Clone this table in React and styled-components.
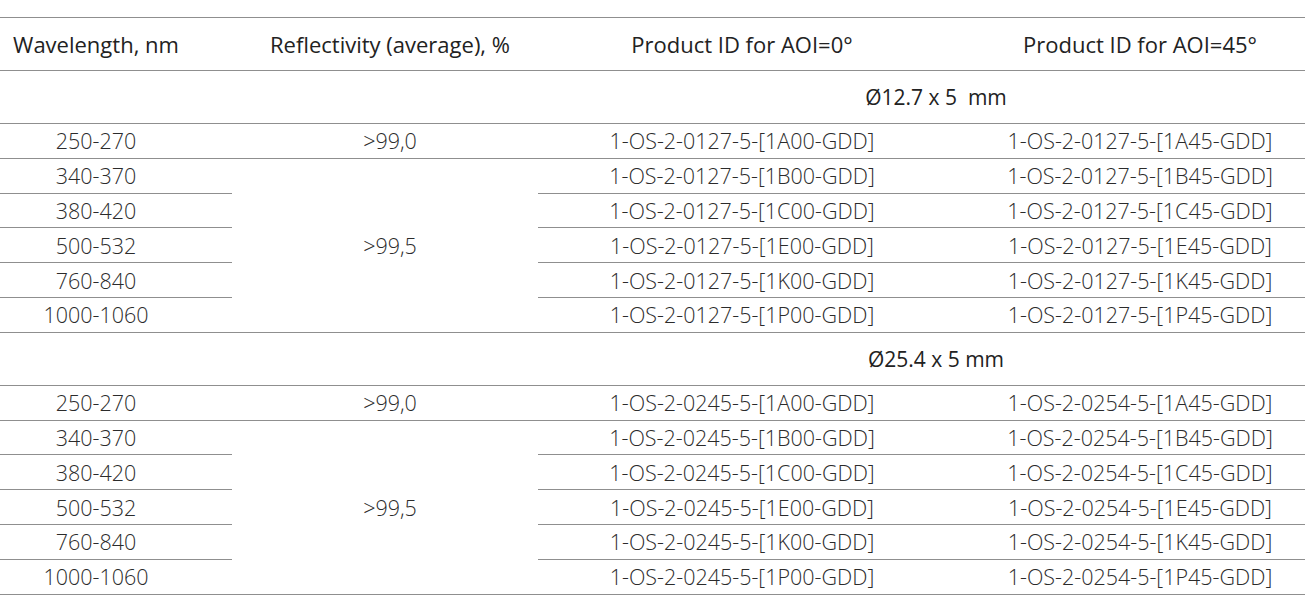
import React from 'react';
import styled, { createGlobalStyle } from 'styled-components';

const GlobalStyle = createGlobalStyle`
  html, body {
    margin: 0;
    padding: 0;
    background: #fff;
    overflow: hidden;
  }
  body {
    font-family: "Open Sans", "Noto Sans", sans-serif;
  }
`;

const sections = [
  {
    size: 'Ø12.7 x 5\u00a0 mm',
    rows: [
      ['250-270', '1-OS-2-0127-5-[1A00-GDD]', '1-OS-2-0127-5-[1A45-GDD]'],
      ['340-370', '1-OS-2-0127-5-[1B00-GDD]', '1-OS-2-0127-5-[1B45-GDD]'],
      ['380-420', '1-OS-2-0127-5-[1C00-GDD]', '1-OS-2-0127-5-[1C45-GDD]'],
      ['500-532', '1-OS-2-0127-5-[1E00-GDD]', '1-OS-2-0127-5-[1E45-GDD]'],
      ['760-840', '1-OS-2-0127-5-[1K00-GDD]', '1-OS-2-0127-5-[1K45-GDD]'],
      ['1000-1060', '1-OS-2-0127-5-[1P00-GDD]', '1-OS-2-0127-5-[1P45-GDD]']
    ]
  },
  {
    size: 'Ø25.4 x 5 mm',
    rows: [
      ['250-270', '1-OS-2-0245-5-[1A00-GDD]', '1-OS-2-0254-5-[1A45-GDD]'],
      ['340-370', '1-OS-2-0245-5-[1B00-GDD]', '1-OS-2-0254-5-[1B45-GDD]'],
      ['380-420', '1-OS-2-0245-5-[1C00-GDD]', '1-OS-2-0254-5-[1C45-GDD]'],
      ['500-532', '1-OS-2-0245-5-[1E00-GDD]', '1-OS-2-0254-5-[1E45-GDD]'],
      ['760-840', '1-OS-2-0245-5-[1K00-GDD]', '1-OS-2-0254-5-[1K45-GDD]'],
      ['1000-1060', '1-OS-2-0245-5-[1P00-GDD]', '1-OS-2-0254-5-[1P45-GDD]']
    ]
  }
];

const App = () => {
  return (
    <Page>
      <GlobalStyle />
      <Table>
        <colgroup>
          <col style={{ width: 272 }} />
          <col style={{ width: 306 }} />
          <col style={{ width: 408 }} />
          <col style={{ width: 388 }} />
        </colgroup>
        <thead>
          <HeadRow>
            <HeadCell>Wavelength, nm</HeadCell>
            <HeadCell shifted>Reflectivity (average), %</HeadCell>
            <HeadCell underline>Product ID for AOI=0°</HeadCell>
            <HeadCell underline>Product ID for AOI=45°</HeadCell>
          </HeadRow>
        </thead>
        <tbody>
          {sections.map((section) => (
            <React.Fragment key={section.size}>
              <SizeRow>
                <SizeCell />
                <SizeCell />
                <SizeCell colSpan={2}>{section.size}</SizeCell>
              </SizeRow>
              {section.rows.map((row, i) => (
                <DataRow key={row[0]}>
                  <Cell>{row[0]}</Cell>
                  {i === 0 && <Cell shifted>&gt;99,0</Cell>}
                  {i === 1 && <Cell shifted rowSpan={5}>&gt;99,5</Cell>}
                  <Cell>{row[1]}</Cell>
                  <Cell>{row[2]}</Cell>
                </DataRow>
              ))}
            </React.Fragment>
          ))}
        </tbody>
      </Table>
    </Page>
  );
};

const Page = styled.div`
  width: 1305px;
  height: 610px;
  padding-top: 17px;
  box-sizing: border-box;
  overflow: hidden;
`;

const Table = styled.table`
  margin-left: -40px;
  width: 1374px;
  table-layout: fixed;
  border-collapse: collapse;
  border-top: 1px solid #8f8f8f;
  color: #2b2b2b;
  font-size: 21.5px;
  font-weight: 300;
  text-align: center;
`;

const HeadRow = styled.tr`
  height: 53px;
`;

const HeadCell = styled.th`
  font-size: 22px;
  font-weight: 400;
  color: #222;
  padding: 0 0 0 ${(p) => (p.shifted ? '10px' : '0')};
  vertical-align: middle;
  white-space: nowrap;
  border-bottom: ${(p) => (p.underline ? '1px solid #8f8f8f' : 'none')};
`;

const SizeRow = styled.tr`
  height: 53px;
  border-top: 1px solid #8f8f8f;
  border-bottom: 1px solid #8f8f8f;
`;

const SizeCell = styled.td`
  padding: 0;
  vertical-align: middle;
  color: #222;
  font-weight: 400;
  font-size: 21px;
`;

const DataRow = styled.tr`
  height: 34.8px;
`;

const Cell = styled.td`
  padding: 0 0 0 ${(p) => (p.shifted ? '10px' : '0')};
  vertical-align: middle;
  border-bottom: 1px solid #8f8f8f;
`;

export default App;
